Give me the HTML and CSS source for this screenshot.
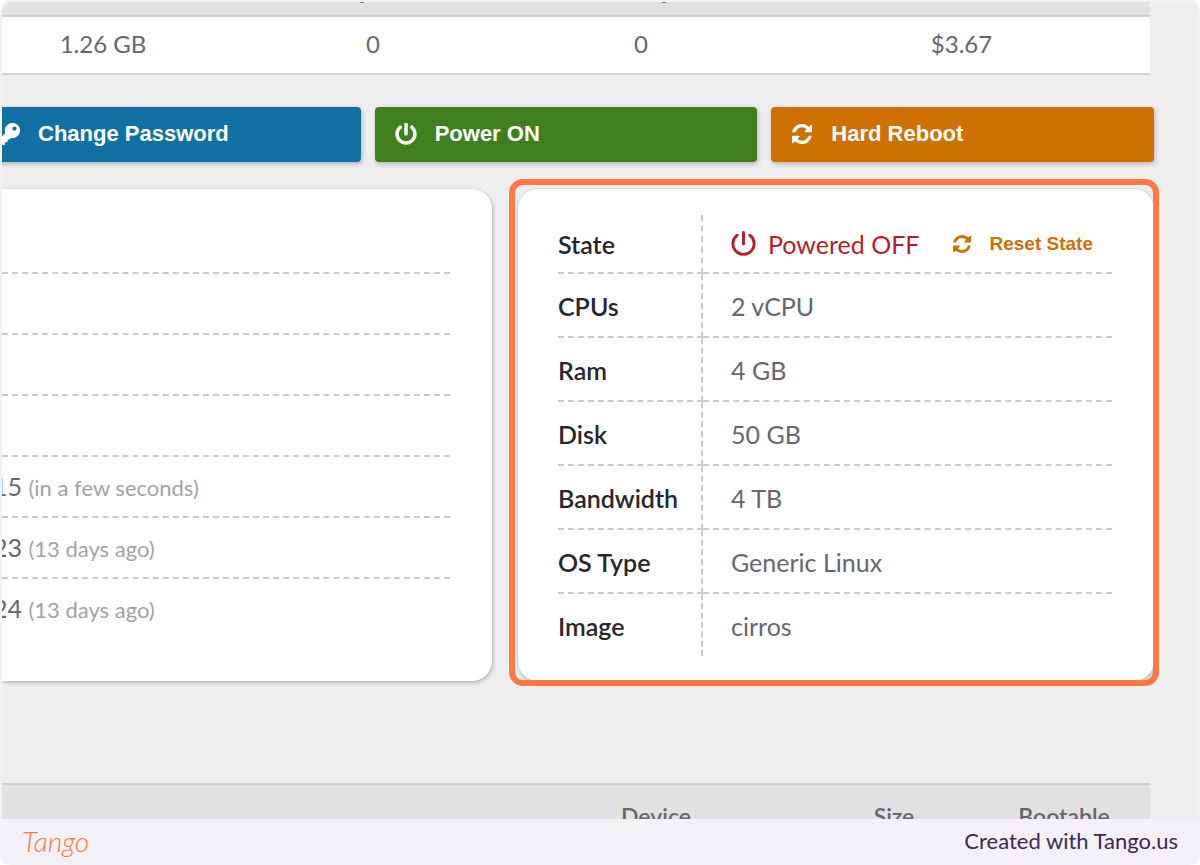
FILE: index.html
```html
<!DOCTYPE html>
<html lang="en">
<head>
<meta charset="utf-8">
<title>Server details</title>
<link rel="stylesheet" href="styles.css">
</head>
<body>
<svg class="sprite" aria-hidden="true">
  <symbol id="refresh" viewBox="0 0 1536 1536"><path fill="currentColor" d="M1511 928q0 5-1 7-64 268-268 434.5t-478 166.5q-146 0-282.500-55t-243.500-157l-129 129q-19 19-45 19t-45-19-19-45v-448q0-26 19-45t45-19h448q26 0 45 19t19 45-19 45l-137 137q71 66 161 102t187 36q134 0 250-65t186-179q11-17 53-117 8-23 30-23h192q13 0 22.500 9.500t9.500 22.500zm25-800v448q0 26-19 45t-45 19h-448q-26 0-45-19t-19-45 19-45l138-138q-148-137-349-137-134 0-250 65t-186 179q-11 17-53 117-8 23-30 23h-199q-13 0-22.500-9.500t-9.500-22.500v-7q65-268 270-434.500t480-166.500q146 0 284 55.500t245 156.500l130-129q19-19 45-19t45 19 19 45z"/></symbol>
</svg>
<div class="frame">
  <main class="screen">
    <table class="usage">
      <colgroup><col class="usage-a"><col class="usage-b"><col class="usage-c"><col></colgroup>
      <thead><tr><th></th><th class="mark"></th><th class="mark mark-right"></th><th></th></tr></thead>
      <tbody><tr><td>1.26 GB</td><td>0</td><td>0</td><td>$3.67</td></tr></tbody>
    </table>

    <div class="actions">
      <button class="action blue" type="button">
        <svg class="icon" viewBox="0 0 512 512" aria-hidden="true"><path fill="currentColor" d="M512 176C512 273.200 433.200 352 336 352c-11.200 0-22.200-1-32.800-3l-24 27A24 24 0 0 1 261.200 384H224v40c0 13.300-10.700 24-24 24h-40v40c0 13.300-10.700 24-24 24H24c-13.300 0-24-10.700-24-24v-78c0-6.400 2.500-12.500 7-17l161.800-161.800C163.100 213.800 160 195.300 160 176 160 78.800 238.800 0 336 0 433.500 0 512 78.500 512 176zM336 128c0 26.500 21.500 48 48 48s48-21.500 48-48-21.500-48-48-48-48 21.500-48 48z"/></svg>
        Change Password
      </button>
      <button class="action green" type="button">
        <svg class="icon" viewBox="0 0 512 512" aria-hidden="true"><path fill="currentColor" d="M400 54.100c63 45 104 118.600 104 201.900 0 136.800-110.800 247.700-247.500 248C120 504.300 8.200 393 8 256.400 7.900 173.100 48.900 99.300 111.800 54.200c11.700-8.300 28-4.800 35 7.700L162.600 90c5.900 10.500 3.100 23.800-6.600 31-41.500 30.800-68 79.600-68 134.900-.1 92.300 74.500 168.100 168 168.100 91.600 0 168.600-74.200 168-169.100-.3-51.800-24.700-101.800-68.100-134-9.700-7.200-12.400-20.500-6.500-30.900l15.800-28.100c7-12.400 23.200-16.100 34.800-7.800zM296 264V24c0-13.300-10.700-24-24-24h-32c-13.300 0-24 10.700-24 24v240c0 13.300 10.700 24 24 24h32c13.300 0 24-10.700 24-24z"/></svg>
        Power ON
      </button>
      <button class="action orange" type="button">
        <svg class="icon" viewBox="-1 -1 24 24" aria-hidden="true"><use href="#refresh" width="22" height="22"/></svg>
        Hard Reboot
      </button>
    </div>

    <div class="cards">
      <section class="card dates">
        <div class="date-row"></div>
        <div class="date-row"></div>
        <div class="date-row"></div>
        <div class="date-row"></div>
        <div class="date-row">15 <small>(in a few seconds)</small></div>
        <div class="date-row">23 <small>(13 days ago)</small></div>
        <div class="date-row">24 <small>(13 days ago)</small></div>
      </section>
      <section class="card highlighted">
        <table class="specs">
          <tbody>
            <tr>
              <th scope="row">State</th>
              <td>
                <div class="state">
                  <span class="off">
                    <svg class="icon-state" viewBox="0 0 24 24" aria-hidden="true"><path fill="none" stroke="currentColor" stroke-width="2.800" stroke-linecap="round" d="M6 4a10.200 10.200 0 1 0 12 0M12 1.500v11"/></svg>
                    Powered OFF
                  </span>
                  <button class="reset" type="button"><svg class="icon-small" aria-hidden="true"><use href="#refresh"/></svg>Reset State</button>
                </div>
              </td>
            </tr>
            <tr><th scope="row">CPUs</th><td>2 vCPU</td></tr>
            <tr><th scope="row">Ram</th><td>4 GB</td></tr>
            <tr><th scope="row">Disk</th><td>50 GB</td></tr>
            <tr><th scope="row">Bandwidth</th><td>4 TB</td></tr>
            <tr><th scope="row">OS Type</th><td>Generic Linux</td></tr>
            <tr><th scope="row">Image</th><td>cirros</td></tr>
          </tbody>
        </table>
      </section>
    </div>

    <table class="volumes">
      <colgroup><col><col class="vol-device"><col class="vol-size"><col class="vol-boot"></colgroup>
      <thead><tr><th></th><th>Device</th><th>Size</th><th>Bootable</th></tr></thead>
    </table>
  </main>
  <footer class="footer">
    <span class="brand">Tango</span>
    <span class="credit">Created with Tango.us</span>
  </footer>
</div>
</body>
</html>
```
FILE: styles.css
```css
* { box-sizing: border-box; }

body {
  margin: 0;
  background: #fff;
  color: #666670;
  font: 25px/30px Lato, "Liberation Sans", sans-serif;
}

.sprite { position: absolute; width: 0; height: 0; }

.frame {
  display: flex;
  flex-direction: column;
  height: 100vh;
  padding: 2px 2px 0;
  border-radius: 10px;
  background: #f3f1f6;
  overflow: hidden;
}

.screen {
  flex: 1;
  min-height: 0;
  overflow: hidden;
  padding-right: 44px;
  border-radius: 10px 10px 0 0;
  background: #eee;
}

table { border-collapse: collapse; table-layout: fixed; }

.usage {
  width: calc(100% + 29px);
  margin-left: -33px;
  background: #fff;
  border-bottom: 2px solid #ccced8;
}
.usage-a { width: 268px; }
.usage-b { width: 272px; }
.usage-c { width: 264px; }
.usage th {
  height: 14px;
  padding: 0;
  background: #e1e1e1;
  border-bottom: 2px solid #ccced8;
}
.usage .mark {
  background: linear-gradient(#777, #777) 46% 0 / 4px 1px no-repeat #e1e1e1;
}
.usage .mark-right { background-position: 59% 0; }
.usage td { height: 58px; padding: 0 0 2px; font-size: 24px; text-align: center; }

.actions {
  display: grid;
  grid-template-columns: repeat(3, 1fr);
  gap: 14px;
  margin: 32px 0 27px -24px;
}
.action {
  display: flex;
  align-items: center;
  gap: 18px;
  height: 55px;
  padding: 0 20px 2px;
  border: 0;
  border-radius: 4px;
  color: #fff;
  font: bold 22px/26px "Liberation Sans", Arial, sans-serif;
  box-shadow: 1px 2px 5px rgba(0, 0, 0, .25);
}
.blue { background: #1270a2; }
.green { background: #3f7f1f; }
.orange { background: #cf7003; }
.icon { width: 22px; height: 22px; }

.cards {
  display: grid;
  grid-template-columns: 490fr 636fr;
  gap: 26px;
}
.card {
  border-radius: 20px;
  background: #fff;
  box-shadow: 1px 2px 4px rgba(0, 0, 0, .22), 0 0 2px rgba(90, 90, 130, .2);
}

.dates {
  border-top-left-radius: 0;
  border-bottom-left-radius: 0;
  padding: 24px 42px 0 0;
  overflow: hidden;
}
.date-row {
  height: 61px;
  padding-top: 14px;
  border-bottom: 2px dashed #c9c9d5;
  text-indent: -9px;
}
.date-row:last-child { border-bottom: 0; }
.date-row small { color: #a2a2aa; font-size: 22px; }

.highlighted { position: relative; padding: 26px 42px 25px 40px; }
.highlighted::after {
  content: "";
  position: absolute;
  inset: -10px -5px -5px -9px;
  border: 6px solid #ff7745;
  border-radius: 14px;
  pointer-events: none;
}

.specs { width: 100%; }
.specs th,
.specs td {
  height: 64px;
  padding: 2px 0 0;
  border-bottom: 2px dashed #c9c9d5;
  text-align: left;
}
.specs th {
  width: 144px;
  border-right: 2px dashed #c9c9d5;
  color: #26262c;
  font-weight: 600;
}
.specs td { padding-left: 28px; }
.specs tr:first-child > * { height: 58px; padding-top: 0; }
.specs tr:last-child > * { height: 63px; border-bottom: 0; }

.state { display: flex; align-items: center; gap: 34px; white-space: nowrap; }
.off { display: flex; align-items: center; gap: 12px; color: #b71c28; }
.icon-state { width: 25px; height: 25px; }
.reset {
  display: flex;
  align-items: center;
  gap: 18px;
  padding: 0;
  border: 0;
  background: none;
  color: #cf7003;
  font: bold 19px/24px "Liberation Sans", Arial, sans-serif;
}
.icon-small { width: 18px; height: 18px; }

.volumes {
  width: calc(100% - 4px);
  margin-top: 102px;
  border-top: 2px solid #ccced8;
  background: #e1e1e1;
}
.vol-device { width: 308px; }
.vol-size { width: 168px; }
.vol-boot { width: 172px; }
.volumes th { height: 62px; padding: 0; color: #66666e; font-weight: 600; font-size: 23px; }

.footer {
  flex: none;
  display: flex;
  align-items: center;
  justify-content: space-between;
  height: 46px;
  padding: 0 20px 2px;
}
.brand { color: #ff7745; font-size: 28px; font-style: italic; font-weight: 300; }
.credit { color: #3d2a52; font-size: 22px; }
```
